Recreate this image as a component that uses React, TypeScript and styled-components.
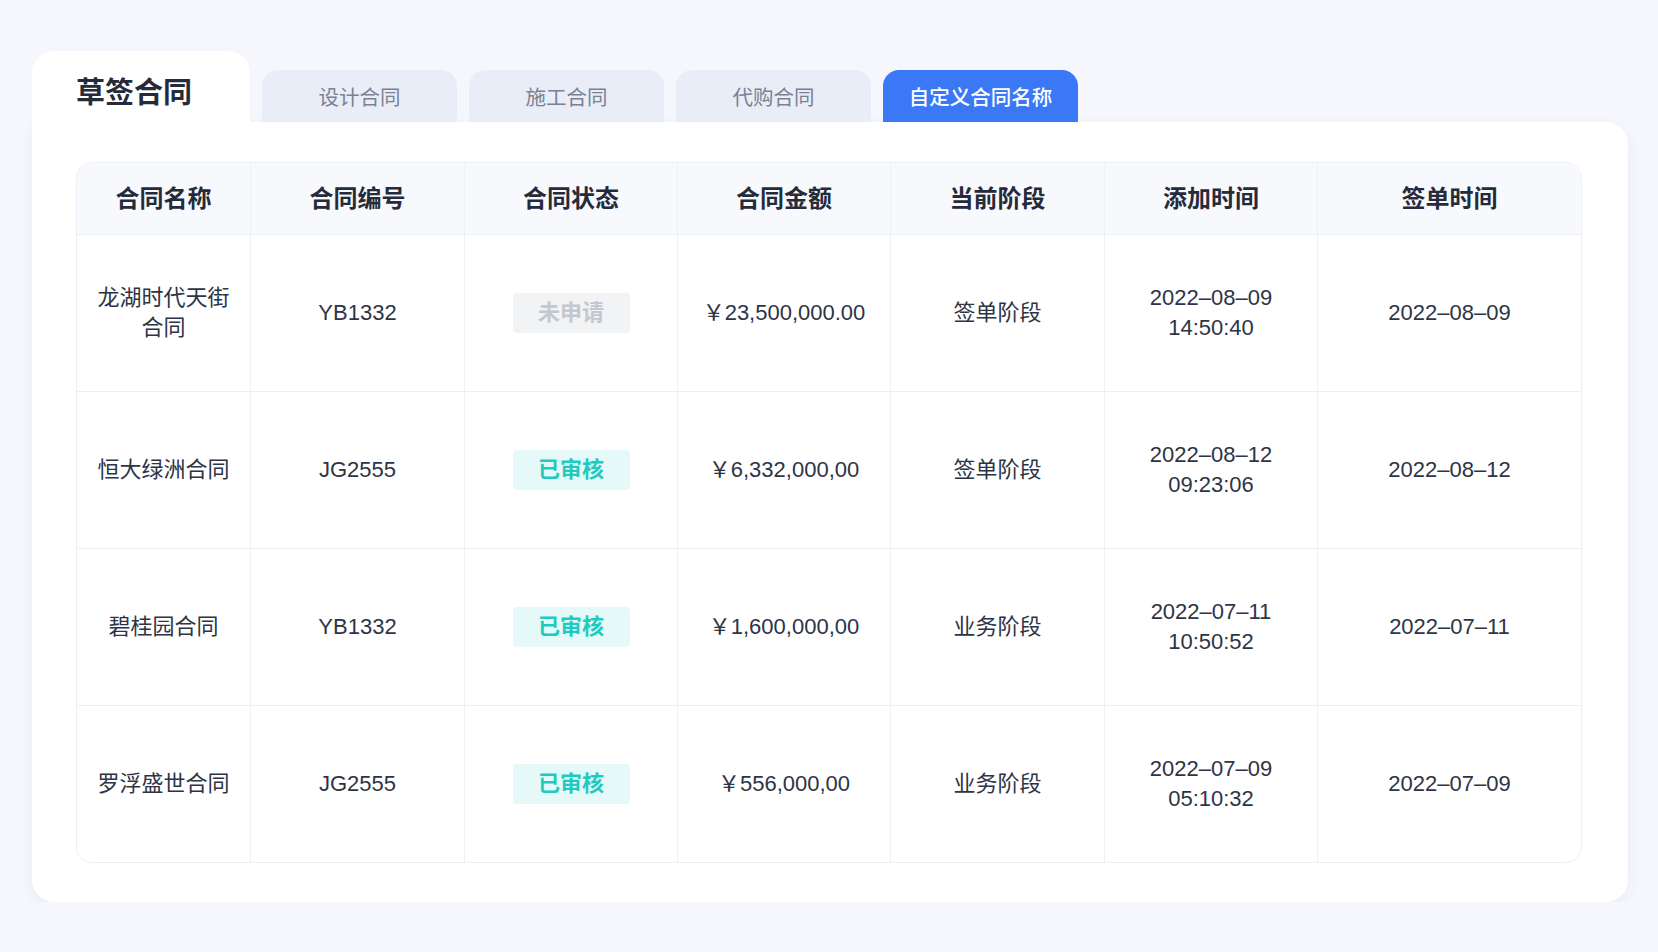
import React from "react";
import styled, { createGlobalStyle } from "styled-components";

const Global = createGlobalStyle`
  body { margin: 0; background: #f5f7fc; font-family: "Liberation Sans", "Noto Sans CJK SC", sans-serif; }
`;

const Page = styled.div`
  padding: 51px 30px 0 32px;
  width: 1596px;
`;
const TabRow = styled.div`
  display: flex;
  align-items: flex-end;
  gap: 12px;
`;
const MainTab = styled.div`
  width: 218px;
  height: 71px;
  background: #fff;
  border-radius: 22px 22px 0 0;
  font-size: 29px;
  font-weight: 700;
  color: #252b3a;
  display: flex;
  align-items: center;
  padding-left: 44px;
  box-sizing: border-box;
  padding-top: 6px;
`;
const Tab = styled.div<{ $active?: boolean }>`
  width: 195px;
  height: 52px;
  border-radius: 16px 16px 0 0;
  background: ${(p) => (p.$active ? "#3a78f6" : "#e9edf7")};
  color: ${(p) => (p.$active ? "#fff" : "#7a8194")};
  font-size: 20.5px;
  font-weight: ${(p) => (p.$active ? 500 : 400)};
  display: flex;
  align-items: center;
  justify-content: center;
`;
const Card = styled.div`
  background: #fff;
  border-radius: 0 22px 22px 22px;
  padding: 40px 46px 39px 44px;
  box-shadow: 0 4px 14px rgba(40, 60, 120, 0.06);
`;
const Table = styled.div`
  border: 1px solid #eceff5;
  border-radius: 16px;
  overflow: hidden;
`;
const Row = styled.div<{ $head?: boolean }>`
  display: grid;
  grid-template-columns: 173px 214px 213px 213px 214px 213px 1fr;
  height: ${(p) => (p.$head ? "71px" : "156px")};
  background: ${(p) => (p.$head ? "#f7f9fd" : "#fff")};
  & + & { border-top: 1px solid #eceff5; }
`;
const Cell = styled.div<{ $head?: boolean }>`
  display: flex;
  align-items: center;
  justify-content: center;
  text-align: center;
  border-left: 1px solid #eef1f6;
  &:first-child { border-left: none; }
  font-size: ${(p) => (p.$head ? "24px" : "22px")};
  font-weight: ${(p) => (p.$head ? 700 : 400)};
  color: ${(p) => (p.$head ? "#252b3a" : "#2d3446")};
  line-height: 30px;
  padding: 0 10px;
`;
const Badge = styled.span<{ $ok: boolean }>`
  width: 117px;
  height: 40px;
  border-radius: 4px;
  display: flex;
  align-items: center;
  justify-content: center;
  font-size: 22px;
  font-weight: 700;
  background: ${(p) => (p.$ok ? "#e5f9f9" : "#f2f3f5")};
  color: ${(p) => (p.$ok ? "#1fcbc0" : "#c3c7cf")};
`;

const heads = ["合同名称", "合同编号", "合同状态", "合同金额", "当前阶段", "添加时间", "签单时间"];
const rows = [
  ["龙湖时代天街合同", "YB1332", false, "￥23,500,000.00", "签单阶段", "2022–08–09", "14:50:40", "2022–08–09"],
  ["恒大绿洲合同", "JG2555", true, "￥6,332,000,00", "签单阶段", "2022–08–12", "09:23:06", "2022–08–12"],
  ["碧桂园合同", "YB1332", true, "￥1,600,000,00", "业务阶段", "2022–07–11", "10:50:52", "2022–07–11"],
  ["罗浮盛世合同", "JG2555", true, "￥556,000,00", "业务阶段", "2022–07–09", "05:10:32", "2022–07–09"],
] as const;

export default function App() {
  return (
    <Page>
      <Global />
      <TabRow>
        <MainTab>草签合同</MainTab>
        <Tab>设计合同</Tab>
        <Tab>施工合同</Tab>
        <Tab>代购合同</Tab>
        <Tab $active>自定义合同名称</Tab>
      </TabRow>
      <Card>
        <Table>
          <Row $head>
            {heads.map((h) => (
              <Cell $head key={h}>{h}</Cell>
            ))}
          </Row>
          {rows.map((r, i) => (
            <Row key={i}>
              <Cell>{r[0] === "龙湖时代天街合同" ? <span>龙湖时代天街<br />合同</span> : r[0]}</Cell>
              <Cell>{r[1]}</Cell>
              <Cell><Badge $ok={r[2] as boolean}>{r[2] ? "已审核" : "未申请"}</Badge></Cell>
              <Cell>{r[3]}</Cell>
              <Cell>{r[4]}</Cell>
              <Cell><span>{r[5]}<br />{r[6]}</span></Cell>
              <Cell>{r[7]}</Cell>
            </Row>
          ))}
        </Table>
      </Card>
    </Page>
  );
}
